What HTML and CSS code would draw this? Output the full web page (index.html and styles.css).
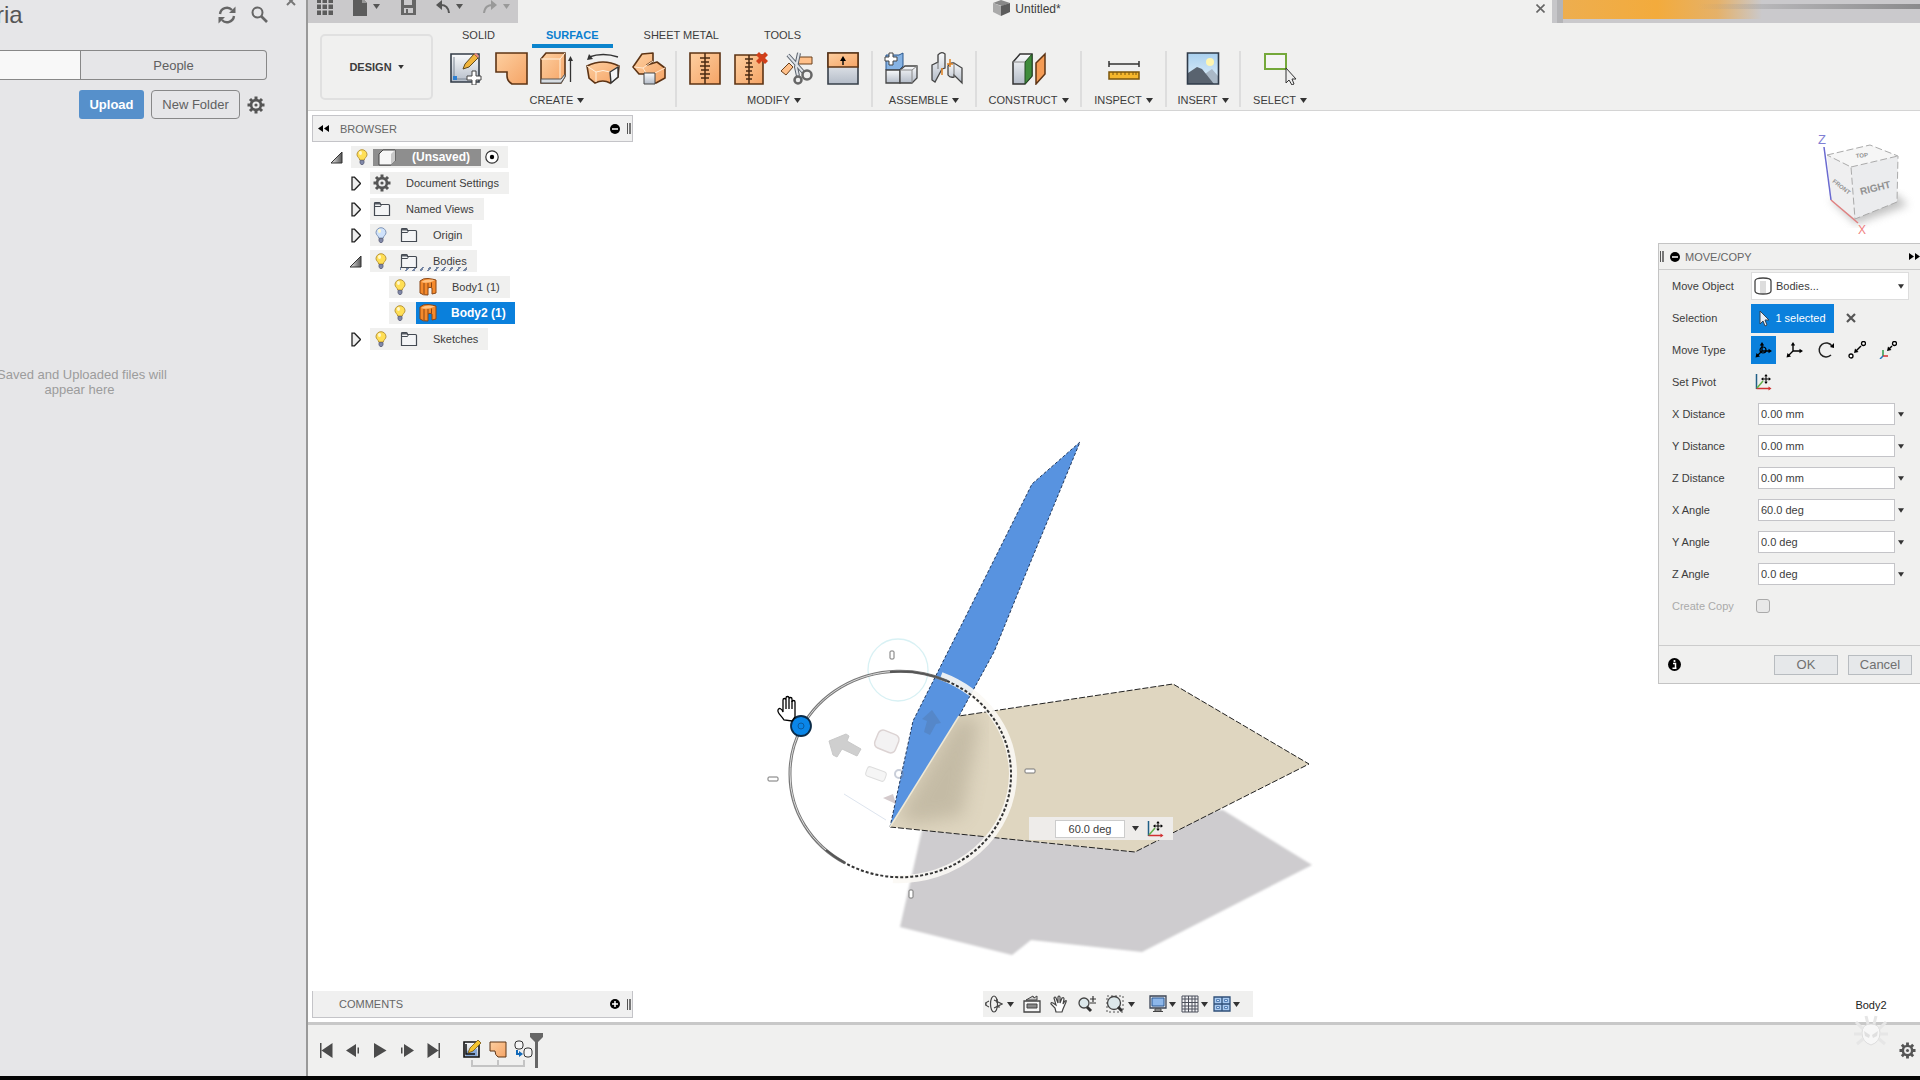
FILE: index.html
```html
<!DOCTYPE html>
<html lang="en">
<head>
<meta charset="utf-8">
<title>Untitled*</title>
<link rel="stylesheet" href="styles.css">
</head>
<body>
<svg class="defs" aria-hidden="true">
  <defs>
    <linearGradient id="peach" x1="0" y1="0" x2="1" y2="1"><stop offset="0" stop-color="#fdcfa0"/><stop offset="1" stop-color="#f5a466"/></linearGradient>
    <linearGradient id="steel" x1="0" y1="0" x2="0" y2="1"><stop offset="0" stop-color="#fafbfc"/><stop offset="1" stop-color="#b4bcc8"/></linearGradient>
    <linearGradient id="sky" x1="0" y1="0" x2="0" y2="1"><stop offset="0" stop-color="#a9d0ee"/><stop offset="1" stop-color="#e3f1fa"/></linearGradient>
    <linearGradient id="wedge" x1="0" y1="0" x2="1" y2="0"><stop offset="0" stop-color="#eee"/><stop offset="1" stop-color="#555"/></linearGradient>
  </defs>
  <symbol id="gear" viewBox="0 0 18 18"><g stroke="currentColor" stroke-width="3"><path d="M9 0.5v17M0.5 9h17M3 3l12 12M15 3L3 15"/></g><circle cx="9" cy="9" r="6.2" fill="currentColor"/><circle cx="9" cy="9" r="3.6" fill="#ececec"/><circle cx="9" cy="9" r="1.6" fill="currentColor"/></symbol>
  <symbol id="caret" viewBox="0 0 7 5"><path d="M0 0h7L3.500 5z" fill="currentColor"/></symbol>
  <symbol id="bulb" viewBox="0 0 14 16"><path d="M7 .7a5 5 0 0 1 5 5c0 2.300-2.500 3-2.700 5.300H4.700C4.500 8.700 2 8 2 5.700a5 5 0 0 1 5-5z" fill="var(--glow,#ffdf55)" stroke="var(--rim,#b8953a)"/><ellipse cx="5.500" cy="4" rx="1.500" ry="2" fill="#fff8cf"/><path d="M5 11.500h4v2.500l-1 1.500H6L5 14z" fill="#8088a8" stroke="#5c6078" stroke-width=".8"/></symbol>
  <symbol id="folder" viewBox="0 0 18 16"><path d="M1.500 14.500v-12q0-1 1-1h4q1 0 1 2h8q1 0 1 1v10z" fill="#f4f5f6" stroke="#444a52" stroke-width="1.200"/><path d="M2 5.500h5.500l1-2" fill="none" stroke="#444a52"/><path d="M2 2h5v1.500H2z" fill="#555a62"/></symbol>
  <symbol id="body" viewBox="0 0 18 18"><path d="M1 3q3-3 8-2.500t8 1.500v13l-4 1v-6q-2-1.500-4 0v7q-5 .5-8-2z" fill="#f58a2c" stroke="#8a4614"/><path d="M2 4q6 2 14-1.500Q8 0 2 4z" fill="#ffc383"/><path d="M5 5v11M9 5v5M12.500 4.500v5" stroke="#8a4614" fill="none"/></symbol>
  <symbol id="closed" viewBox="0 0 10 15"><path d="M1 1.200h2.500l6 6.300-6 6.300H1z" fill="#eee" stroke="#222" stroke-width="1.300"/></symbol>
  <symbol id="open" viewBox="0 0 13 13"><path d="M12 1v11H1z" fill="url(#wedge)" stroke="#333"/></symbol>
  <symbol id="pivot" viewBox="0 0 18 18"><path d="M2.500 1v15" stroke="#1f5f86" stroke-width="1.500"/><path d="M2.500 15.500h13" stroke="#d03030" stroke-width="1.500"/><path d="M3 15l6-7" stroke="#62b04a" stroke-width="1.500"/><path d="M14.500 13.500l3 2-3 2z" fill="#d03030"/><path d="M12 1l1.700 2.300h-3.400zM12 11l1.700-2.300h-3.400zM7 6l2.300-1.700v3.400zM17 6l-2.300-1.700v3.400z"/><path d="M12 3v6M9 6h6" stroke="#000"/></symbol>
  <symbol id="triad" viewBox="0 0 18 18"><path d="M7 10V3M7 10h8M7 10l-5 5" stroke="currentColor" stroke-width="1.400" fill="none"/><path d="M7 1l2.200 3.500H4.800zM17 10l-3.500 2.200V7.800zM.5 16.500l1-4.500 3.500 3.500z" fill="currentColor"/></symbol>
</svg>

<div class="workspace">
  <aside class="data-panel">
    <div class="panel-head">
      <h1>ria</h1>
      <button class="bare" aria-label="Refresh"><svg width="18" height="18" viewBox="0 0 18 18" fill="none" stroke="#666" stroke-width="2.400"><path d="M2 8a7 7 0 0 1 12-4M16 10a7 7 0 0 1-12 4"/><path d="M17.500.5v6.500h-6.500zM.5 17.500v-6.500H7z" fill="#666" stroke="none"/></svg></button>
      <button class="bare" aria-label="Search"><svg width="17" height="17" viewBox="0 0 17 17" fill="none" stroke="#666"><circle cx="6.500" cy="6.500" r="5" stroke-width="2"/><path d="M10 10l6 6" stroke-width="2.600"/></svg></button>
      <button class="bare close" aria-label="Close"><svg width="10" height="10" viewBox="0 0 10 10" stroke="#777" stroke-width="2"><path d="M1 1l8 8M9 1L1 9"/></svg></button>
    </div>
    <div class="segments"><button class="on" aria-label="Data"></button><button>People</button></div>
    <div class="actions"><button class="upload">Upload</button><button class="new-folder">New Folder</button><button class="bare" aria-label="Settings"><svg class="cog" width="18" height="18"><use href="#gear"/></svg></button></div>
    <p class="empty">Saved and Uploaded files will<br>appear here</p>
  </aside>

  <div class="app">
    <div class="titlebar">
      <div class="quick">
        <button class="bare" aria-label="Grid"><svg width="16" height="16" viewBox="0 0 16 16" fill="#5c5c5c"><path d="M0 0h4v4H0zM5.500 0h4.500v4H5.500zM11.500 0H16v4h-4.500zM0 5.500h4V10H0zM5.500 5.500h4.500V10H5.500zM11.500 5.500H16V10h-4.500zM0 11.500h4V16H0zM5.500 11.500h4.500V16H5.500zM11.500 11.500H16V16h-4.500z"/></svg></button>
        <button class="bare file" aria-label="File"><svg width="14" height="18" viewBox="0 0 14 18"><path d="M0 0h9l5 5v13H0z" fill="#5c5c5c"/><path d="M9 0v5h5" fill="#999"/></svg><svg class="caret" width="7" height="5"><use href="#caret"/></svg></button>
        <button class="bare" aria-label="Save"><svg width="15" height="17" viewBox="0 0 15 17"><path d="M0 0h13l2 2v15H0z" fill="#666"/><path d="M3 1h8v6H3zM3 10h9v5H3z" fill="#cbcacc"/><path d="M5 11h2v4H5z" fill="#666"/></svg></button>
        <button class="bare" aria-label="Undo"><svg width="14" height="14" viewBox="0 0 14 14"><path d="M3 5q9-1 10 8" fill="none" stroke="#555" stroke-width="2"/><path d="M0 5l6-5v10z" fill="#555"/></svg><svg class="caret" width="7" height="5"><use href="#caret"/></svg></button>
        <button class="bare dim" aria-label="Redo"><svg width="14" height="14" viewBox="0 0 14 14"><path d="M11 5q-9-1-10 8" fill="none" stroke="#999" stroke-width="2"/><path d="M14 5L8 0v10z" fill="#999"/></svg><svg class="caret" width="7" height="5"><use href="#caret"/></svg></button>
      </div>
      <div class="doc-tab"><svg width="17" height="16" viewBox="0 0 17 16"><path d="M0 3l8-3 9 3-8 3z" fill="#888"/><path d="M0 3l8 3v10l-8-4z" fill="#aaa"/><path d="M8 6l9-3v9l-9 4z" fill="#5c5c5c"/></svg><span>Untitled*</span></div>
      <button class="bare tab-close" aria-label="Close tab"><svg width="9" height="9" viewBox="0 0 9 9" stroke="#666" stroke-width="1.600"><path d="M.5.5l8 8M8.500.5l-8 8"/></svg></button>
      <div class="accent"></div>
    </div>

    <header class="ribbon">
      <button class="design">DESIGN <svg class="caret" width="6" height="4"><use href="#caret"/></svg></button>
      <div class="ribbon-body">
        <nav class="tabs"><a href="#solid">SOLID</a><a href="#surface" class="current">SURFACE</a><a href="#sheet">SHEET METAL</a><a href="#tools">TOOLS</a></nav>
        <div class="groups">
          <section class="group create">
            <div class="icons">
              <button aria-label="Create Sketch"><svg width="34" height="34" viewBox="0 0 34 34"><path d="M3 3h28v28H3z" fill="url(#steel)" stroke="#333c48" stroke-width="1.600"/><path d="M6 6v22h20" stroke="#7d8794" fill="none"/><path d="M5 25h4v4H5z" fill="#2f7fd0"/><path d="M15 18l2-5L26 3l4 4-9 9z" fill="#f0b43c" stroke="#5e4a1e"/><path d="M26 3l2-1 3 3-1 2z" fill="#e88b80"/><path d="M24 20h4v5h5v4h-5v5h-4v-5h-5v-4h5z" fill="#fff" stroke="#444"/></svg></button>
              <button aria-label="Patch"><svg width="34" height="34" viewBox="0 0 34 34"><path d="M2 2h31v31H18q-5-3-5-8v-4H2z" fill="url(#peach)" stroke="#5d3415" stroke-width="1.600"/></svg></button>
              <button aria-label="Extrude"><svg width="34" height="34" viewBox="0 0 34 34"><path d="M1 8l5-6h19v23l-4 7H1z" fill="url(#peach)" stroke="#5d3415" stroke-width="1.600"/><path d="M1 8h19l5-6M20 8v20" stroke="#fff0dc" fill="none"/><path d="M1 28h20l4-5v3l-4 6H1z" fill="#d8dde2" stroke="#555"/><path d="M30.500 31V8" stroke="#333" stroke-width="1.300"/><path d="M30.500 5l2.500 5h-5z" fill="#333"/></svg></button>
              <button aria-label="Revolve"><svg width="34" height="34" viewBox="0 0 34 34"><path d="M1 15q16-8 32 0l-1 11-8 6q-7-4-15 0l-6-5z" fill="url(#peach)" stroke="#5d3415" stroke-width="1.600"/><path d="M1 15l9 6q7-3 14 0l9-6M10 21v10" stroke="#fff0dc" fill="none"/><path d="M24 21l8-5v10l-7 6z" fill="#f3f5f7" stroke="#333" stroke-width="1.400"/><path d="M3 6q14-5 29 0" fill="none" stroke="#333" stroke-width="1.400"/><path d="M1 9l2-6 4 5z" fill="#333"/></svg></button>
              <button aria-label="Sweep"><svg width="34" height="34" viewBox="0 0 34 34"><path d="M1 16L10 3l11-1v8l-6 4 10-3 8 6v10l-9 5H13v-9H7z" fill="url(#peach)" stroke="#5d3415" stroke-width="1.600" stroke-linejoin="round"/><path d="M2 16l9 1 10-7M23 22l10-5M11 17l3 5" stroke="#ffe6cd" fill="none"/><path d="M12 22h11v11H12z" fill="url(#steel)" stroke="#444"/></svg></button>
            </div>
            <button class="menu">CREATE <svg class="caret" width="7" height="5"><use href="#caret"/></svg></button>
          </section>
          <section class="group modify">
            <div class="icons">
              <button aria-label="Stitch"><svg width="34" height="34" viewBox="0 0 34 34"><path d="M2 2h30v31H2z" fill="url(#peach)" stroke="#5d3415" stroke-width="1.600"/><path d="M17 2v31M12 7h10M13 11h8M12 15h10M13 19h8M12 23h10M13 27h8" stroke="#4a2a12" stroke-width="1.500"/></svg></button>
              <button aria-label="Unstitch"><svg width="34" height="34" viewBox="0 0 34 34"><path d="M1 4h28v29H1z" fill="url(#peach)" stroke="#5d3415" stroke-width="1.600"/><path d="M15 4v29M11 8h8M12 12h6M11 16h8M12 20h6M11 24h8M12 28h6" stroke="#4a2a12" stroke-width="1.500"/><path d="M22 4l3-3 3 3 3-3 3 3-3 3 3 3-3 3-3-3-3 3-3-3 3-3z" fill="#d2401a"/></svg></button>
              <button aria-label="Trim"><svg width="34" height="34" viewBox="0 0 34 34"><path d="M18 6h14v7H18zM1 20l8-8 4 4-7 8z" fill="#ffc08a" stroke="#6b401c"/><path d="M8 4l16 18M19 2l-3 14 2 9" stroke="#59616b" stroke-width="4" fill="none"/><path d="M8 4l16 18M19 2l-3 14 2 9" stroke="#dfe3e8" stroke-width="2" fill="none"/><circle cx="18" cy="29" r="3.500" fill="#eee" stroke="#666" stroke-width="2.500"/><circle cx="27" cy="24" r="4.500" fill="#eee" stroke="#666" stroke-width="2.500"/></svg></button>
              <button aria-label="Extend"><svg width="34" height="34" viewBox="0 0 34 34"><path d="M2 2h30v31H2z" fill="url(#steel)" stroke="#37404a" stroke-width="1.600"/><path d="M2 2h30v14H2z" fill="url(#peach)" stroke="#5d3415" stroke-width="1.600"/><path d="M17 14V8" stroke="#111" stroke-width="1.500"/><path d="M17 5l3 5h-6z"/></svg></button>
            </div>
            <button class="menu">MODIFY <svg class="caret" width="7" height="5"><use href="#caret"/></svg></button>
          </section>
          <section class="group assemble">
            <div class="icons">
              <button aria-label="New Component"><svg width="34" height="34" viewBox="0 0 34 34"><path d="M2 4h13l4-2v13l-4 4H2z" fill="#86b3e4" stroke="#2b578c"/><path d="M2 19h14v13H2z" fill="url(#steel)" stroke="#444" stroke-width="1.300"/><path d="M16 19l5-4h12v12l-5 5H16z" fill="url(#steel)" stroke="#444" stroke-width="1.300"/><path d="M16 19h12l5-4M28 19v13" fill="none" stroke="#888"/><path d="M5 2h4v4h4v4H9v4H5v-4H1V6h4z" fill="#fff" stroke="#444"/></svg></button>
              <button aria-label="Joint"><svg width="34" height="34" viewBox="0 0 34 34"><path d="M2 14l6-3V4q3-4 7-1v14l-3 1-7 13-3-2z" fill="url(#steel)" stroke="#444" stroke-width="1.300"/><path d="M18 15q2-4 6-3l8 5v15l-8-8v2q-4 1-6-2z" fill="url(#steel)" stroke="#444" stroke-width="1.300"/><path d="M8 4v14M24 12v14" stroke="#777"/><path d="M12 17v7M20 8v8M17 13h6" stroke="#e0872c" stroke-width="1.600"/></svg></button>
            </div>
            <button class="menu">ASSEMBLE <svg class="caret" width="7" height="5"><use href="#caret"/></svg></button>
          </section>
          <section class="group construct">
            <div class="icons"><button aria-label="Offset Plane"><svg width="34" height="34" viewBox="0 0 34 34"><path d="M1 11l7-8h12v22l-7 8H1z" fill="url(#steel)" stroke="#333" stroke-width="1.500"/><path d="M13 11l7-8v22l-7 8z" fill="#3f8c3c" stroke="#234a22"/><path d="M1 11h12" stroke="#888"/><path d="M24 12l9-9v20l-9 10z" fill="#f59c55" stroke="#5d3415" stroke-width="1.500"/></svg></button></div>
            <button class="menu">CONSTRUCT <svg class="caret" width="7" height="5"><use href="#caret"/></svg></button>
          </section>
          <section class="group inspect">
            <div class="icons"><button aria-label="Measure"><svg width="34" height="34" viewBox="0 0 34 34"><path d="M2 13h30M2 10v6M32 10v6" stroke="#333" stroke-width="1.500"/><path d="M2 21h30v7H2z" fill="#f6b72c" stroke="#7b560c" stroke-width="1.500"/><path d="M6 21v3M10 21v3M14 21v3M18 21v3M22 21v3M26 21v3M29 21v3" stroke="#7b560c"/></svg></button></div>
            <button class="menu">INSPECT <svg class="caret" width="7" height="5"><use href="#caret"/></svg></button>
          </section>
          <section class="group insert">
            <div class="icons"><button aria-label="Canvas"><svg width="34" height="34" viewBox="0 0 34 34"><path d="M1.500 2h31v31h-31z" fill="url(#sky)"/><circle cx="24" cy="11" r="4" fill="#fff6b0"/><path d="M16 25l10-7 6 7v8H16z" fill="#a9b8c6"/><path d="M2 22l9-6 5 2 12 15H2z" fill="#59636f"/><path d="M1.500 2h31v31h-31z" fill="none" stroke="#2f3b49" stroke-width="1.600"/></svg></button></div>
            <button class="menu">INSERT <svg class="caret" width="7" height="5"><use href="#caret"/></svg></button>
          </section>
          <section class="group select">
            <div class="icons"><button aria-label="Select"><svg width="34" height="34" viewBox="0 0 34 34"><path d="M2 3h21v15H2z" fill="#f4f4f4" stroke="#74a83a" stroke-width="2"/><path d="M23 17v15l3-3 3 5 2-1-2-5h4z" fill="#eee" stroke="#333"/></svg></button></div>
            <button class="menu">SELECT <svg class="caret" width="7" height="5"><use href="#caret"/></svg></button>
          </section>
        </div>
      </div>
    </header>

    <main class="canvas">
      <svg class="scene" viewBox="308 111 1612 911" aria-label="Model view">
        <defs><filter id="soft"><feGaussianBlur stdDeviation="1"/></filter><filter id="smudge"><feGaussianBlur stdDeviation="9"/></filter><clipPath id="plate"><path d="M890 827L959 716L1173 684L1309 764L1135 852z"/></clipPath></defs>
        <path d="M922 830L900 927L1012 955L1031 940L1142 952L1312 865L1223 810z" fill="#cecccf" filter="url(#soft)"/>
        <path d="M890 827L959 716L1173 684L1309 764L1135 852z" fill="#dfd6c0"/>
        <g clip-path="url(#plate)"><path d="M958 716l22 4-18 96-50 8-14-8z" fill="#a59c86" opacity=".45" filter="url(#smudge)"/></g>
        <path d="M890 827L1135 852L1309 764L1173 684L959 716" fill="none" stroke="#222" stroke-dasharray="6 2"/>
        <path d="M1080 442L1032 484L966 616L913 721L890 827L959 716L994 652L1024 578z" fill="#5893e0"/>
        <path d="M959 716L994 652L1024 578L1080 442L1032 484L966 616L913 721L890 827" fill="none" stroke="#23395c" stroke-dasharray="3 2"/>
        <path d="M890 827L959 716" stroke="#f0e9d5" stroke-width="1.500"/>
        <ellipse cx="898" cy="670" rx="30" ry="31" fill="none" stroke="#d8f1f4" stroke-width="1.300"/>
        <path d="M844 794l42 26" stroke="#dde4ee"/>
        <path d="M829 741l17-7 3 2-2 5 14 8-4 7-15-7-5 8-4-2z" fill="#cfcfcf" stroke="#c9c9c9"/>
        <rect x="876" y="732" width="22" height="19" rx="5" transform="rotate(22 887 741)" fill="#f3f2f3" stroke="#dcd3d3" stroke-width="1.500"/>
        <rect x="866" y="769" width="20" height="10" rx="3" transform="rotate(20 876 774)" fill="#f5f5f5" stroke="#ddd"/>
        <path d="M922 719l10-9 9 13-5 1-6 11-6-3 3-11z" fill="#51729f" opacity=".35"/>
        <circle cx="899" cy="774" r="4" fill="none" stroke="#7784a0" stroke-width="2" opacity=".4"/>
        <path d="M883 798l10-4 3 10z" fill="#b8a6aa" opacity=".6"/>
        <path d="M941 676A114 106 0 0 1 1013 774A114 106 0 0 1 893 879" fill="none" stroke="#fbf8f4" stroke-width="8" opacity=".9"/>
        <path d="M845 863A110 102 0 0 1 790 774A110 102 0 0 1 947 681" fill="none" stroke="#777" stroke-width="3"/>
        <path d="M845 863A110 102 0 0 1 790 774A110 102 0 0 1 947 681" fill="none" stroke="#ddd"/>
        <path d="M947 681A110 102 0 0 1 1011 774A110 102 0 0 1 845 863" fill="none" stroke="#333" stroke-width="2" stroke-dasharray="3 2"/>
        <path d="M890 672A110 102 0 0 1 947 681M845 863A110 102 0 0 1 826 850" fill="none" stroke="#555" stroke-width="2"/>
        <g fill="#fff" stroke="#777"><rect x="890" y="651" width="4" height="8" rx="1"/><rect x="909" y="890" width="4" height="8" rx="1"/><rect x="768" y="777" width="10" height="4" rx="1"/><rect x="1025" y="769" width="10" height="4" rx="1"/></g>
        <circle cx="801" cy="726" r="10" fill="#0a86e8" stroke="#0b2b48" stroke-width="1.800"/><circle cx="801" cy="726" r="3" fill="none" stroke="#0b5ba0"/>
        <path d="M784 720c-3-5-7-7-6-10s4-1 5 2v-12c0-2 3-2 3 0v-2c0-2 3-2 3 0v1c0-2 3-2 3 0v3c0-2 3-2 3 0v15l-3 4z" fill="#fff" stroke="#000" stroke-width="1.300"/><path d="M786 700v9M789 699v10M792 701v8" stroke="#000" stroke-width="1.300"/>
      </svg>

      <form class="hud"><input type="text" aria-label="Angle" value="60.0 deg"><svg class="caret" width="7" height="5"><use href="#caret"/></svg><svg width="18" height="18"><use href="#pivot"/></svg></form>

      <section class="browser">
        <div class="dock-head"><svg width="11" height="7" viewBox="0 0 11 7"><path d="M5 0v7L0 3.500zM11 0v7L6 3.500z"/></svg><h2>BROWSER</h2><svg width="10" height="10" viewBox="0 0 10 10"><circle cx="5" cy="5" r="5"/><path d="M2 5h6" stroke="#fff" stroke-width="1.500"/></svg><i class="grips"></i></div>
        <ul class="tree">
          <li class="l0"><svg width="13" height="13"><use href="#open"/></svg><div class="node"><svg width="14" height="16"><use href="#bulb"/></svg><span class="root"><svg width="18" height="17" viewBox="0 0 18 17"><path d="M1 5l4-4h12v11l-4 4H1z" fill="#f6f6f6" stroke="#444"/><path d="M13 5v11l4-4V1z" fill="#c9c9c9"/></svg>(Unsaved)</span><svg width="14" height="14" viewBox="0 0 14 14"><circle cx="7" cy="7" r="6.200" fill="#fff" stroke="#333" stroke-width="1.200"/><circle cx="7" cy="7" r="2.200"/></svg></div></li>
          <li class="l1"><svg width="10" height="15"><use href="#closed"/></svg><div class="node"><svg class="cog" width="18" height="18"><use href="#gear"/></svg><span>Document Settings</span></div></li>
          <li class="l1"><svg width="10" height="15"><use href="#closed"/></svg><div class="node"><svg width="18" height="16"><use href="#folder"/></svg><span>Named Views</span></div></li>
          <li class="l1"><svg width="10" height="15"><use href="#closed"/></svg><div class="node lit"><svg class="off" width="14" height="16"><use href="#bulb"/></svg><svg width="18" height="16"><use href="#folder"/></svg><span>Origin</span></div></li>
          <li class="l1 wide"><svg width="13" height="13"><use href="#open"/></svg><div class="node lit"><svg width="14" height="16"><use href="#bulb"/></svg><span class="hatched"><svg width="18" height="16"><use href="#folder"/></svg>Bodies</span></div></li>
          <li class="l2"><div class="node lit"><svg width="14" height="16"><use href="#bulb"/></svg><svg width="18" height="18"><use href="#body"/></svg><span>Body1 (1)</span></div></li>
          <li class="l2"><div class="node lit picked"><svg width="14" height="16"><use href="#bulb"/></svg><span class="chosen"><svg width="18" height="18"><use href="#body"/></svg>Body2 (1)</span></div></li>
          <li class="l1"><svg width="10" height="15"><use href="#closed"/></svg><div class="node lit"><svg width="14" height="16"><use href="#bulb"/></svg><svg width="18" height="16"><use href="#folder"/></svg><span>Sketches</span></div></li>
        </ul>
      </section>

      <section class="comments dock-head"><h2>COMMENTS</h2><svg width="10" height="10" viewBox="0 0 10 10"><circle cx="5" cy="5" r="5"/><path d="M2 5h6M5 2v6" stroke="#fff" stroke-width="1.500"/></svg><i class="grips"></i></section>

      <div class="viewbar">
        <button aria-label="Orbit"><svg width="18" height="18" viewBox="0 0 18 18" fill="none" stroke="#444" stroke-width="1.200"><ellipse cx="9" cy="9" rx="3.500" ry="8"/><path d="M4 6q-7 3 0 6M9 5l8 4-8 4M1 7v4M11 12h4M12 4v4"/></svg><svg class="caret" width="7" height="5"><use href="#caret"/></svg></button>
        <button aria-label="Look At"><svg width="18" height="18" viewBox="0 0 18 18"><path d="M1 6h16v11H1z" fill="#f6f6f6" stroke="#444" stroke-width="1.300"/><path d="M3 5l7-4 1 2 3-2v4z" fill="#ccc" stroke="#444"/><path d="M4 9h10v4H4z" fill="#888" stroke="#444"/></svg></button>
        <button aria-label="Pan"><svg width="18" height="18" viewBox="0 0 18 18"><path d="M6 17l-1-4-4-4q-.5-2 2-1l3 2-2-7q1-2 2 0l2 5V2q1-2 2 0v6l2-5q2-1 2 1l-1 5 2-3q2-1 1 1l-3 7-1 3z" fill="#fff" stroke="#444" stroke-width="1.200"/></svg></button>
        <button aria-label="Zoom"><svg width="20" height="18" viewBox="0 0 20 18"><circle cx="7" cy="8" r="5" fill="#dce7ea" stroke="#444" stroke-width="1.300"/><path d="M10 12l4 4" stroke="#333" stroke-width="3"/><path d="M13 4h6M16 1v6M13 8h6" stroke="#333" stroke-width="1.200"/></svg></button>
        <button aria-label="Fit"><svg width="18" height="18" viewBox="0 0 18 18"><path d="M1 1h16v16H1z" fill="none" stroke="#555" stroke-dasharray="2 2"/><circle cx="8" cy="8" r="6.500" fill="#dce7ea" stroke="#444" stroke-width="1.300"/><path d="M12 12l4 4" stroke="#333" stroke-width="3"/></svg><svg class="caret" width="7" height="5"><use href="#caret"/></svg></button>
        <button class="after-gap" aria-label="Display"><svg width="18" height="18" viewBox="0 0 18 18"><path d="M1 1h16v12H1z" fill="#d5dbe2" stroke="#3c4656" stroke-width="1.300"/><path d="M3 3h12v8H3z" fill="#8db7ea" stroke="#2d5a96"/><path d="M6 14h6v2H6zM4 16.500h10" stroke="#444" fill="#ccc"/></svg><svg class="caret" width="7" height="5"><use href="#caret"/></svg></button>
        <button aria-label="Grid"><svg width="18" height="18" viewBox="0 0 18 18"><path d="M1 1h16v16H1zM4 1v16M7.500 1v16M11 1v16M14 1v16M1 4h16M1 7.500h16M1 11h16M1 14h16" fill="#f4f4f6" stroke="#4b4f5a"/></svg><svg class="caret" width="7" height="5"><use href="#caret"/></svg></button>
        <button aria-label="Viewports"><svg width="18" height="18" viewBox="0 0 18 18"><path d="M1 2h16v14H1zM9 2v14M1 9h16" fill="#a9caf0" stroke="#2f4f78" stroke-width="1.300"/><path d="M3.500 4.500h3v2h-3zM11.500 4.500h3v2h-3zM3.500 11.500h3v2h-3zM11.500 11.500h3v2h-3z" fill="#cfe2f8" stroke="#5580b5"/></svg><svg class="caret" width="7" height="5"><use href="#caret"/></svg></button>
      </div>

      <div class="right-dock">
        <svg class="cube" width="110" height="118" viewBox="0 0 110 118">
          <defs><filter id="shade"><feGaussianBlur stdDeviation="4"/></filter></defs>
          <path d="M20 74L46 99L98 80L84 68z" fill="#999" opacity=".6" filter="url(#shade)"/>
          <path d="M17 30L60 20L88 31L41 42z" fill="#f6f6f6"/><path d="M17 30L41 42L45 94L21 75z" fill="#efeff0"/><path d="M41 42L88 31L87 77L45 94z" fill="#ebecee"/>
          <path d="M17 30L60 20L88 31L87 77L45 94L41 42L17 30M41 42L88 31" fill="none" stroke="#aaa" stroke-dasharray="7 3"/>
          <path d="M14 22L21 75" stroke="#6a6ad0" stroke-width="1.500"/><path d="M21 75L48 98" stroke="#e08080" stroke-width="1.500"/>
          <text x="8" y="19" class="axis-z">Z</text><text x="48" y="109" class="axis-x">X</text>
          <text x="51" y="70" transform="rotate(-14 51 70)" class="face">RIGHT</text>
          <text x="22" y="57" transform="rotate(38 22 57)" class="face small">FRONT</text>
          <text x="46" y="33" transform="rotate(-6 46 33)" class="face small">TOP</text>
        </svg>
        <form class="dialog">
          <div class="dialog-head"><i class="grips"></i><svg width="10" height="10" viewBox="0 0 10 10"><circle cx="5" cy="5" r="5"/><path d="M2 5h6" stroke="#fff" stroke-width="1.500"/></svg><h2>MOVE/COPY</h2><svg width="11" height="7" viewBox="0 0 11 7"><path d="M0 0v7l5-3.500zM6 0v7l5-3.500z"/></svg></div>
          <div class="fields">
            <div class="row"><label for="obj">Move Object</label><div class="picker"><svg width="18" height="18" viewBox="0 0 18 18"><path d="M1 4q0-3 8-3t8 3v10q0 3-8 3t-8-3z" fill="#fff" stroke="#444" stroke-width="1.300"/><path d="M6 4h6v12H6z" fill="#ddd"/></svg><select id="obj"><option>Bodies...</option></select><svg class="caret" width="6" height="5"><use href="#caret"/></svg></div></div>
            <div class="row"><span class="label">Selection</span><button type="button" class="selected"><svg width="10" height="17" viewBox="0 0 10 17"><path d="M1 1v13l3-3 2 5 2-1-2-5h4z" fill="#e8eef5" stroke="#345"/></svg>1 selected</button><button type="button" class="bare clear" aria-label="Clear"><svg width="10" height="10" viewBox="0 0 10 10" stroke="#555" stroke-width="2.200"><path d="M1 1l8 8M9 1L1 9"/></svg></button></div>
            <div class="row"><span class="label">Move Type</span><div class="types">
              <button type="button" class="on" aria-label="Free Move"><svg width="18" height="18"><use href="#triad"/><circle cx="8" cy="9" r="3" fill="none" stroke="#000" stroke-width="1.200"/></svg></button>
              <button type="button" aria-label="Translate"><svg width="18" height="18"><use href="#triad"/></svg></button>
              <button type="button" aria-label="Rotate"><svg width="18" height="18" viewBox="0 0 18 18"><path d="M14 14A7 7 0 1 1 15 5" fill="none" stroke="#222" stroke-width="1.500"/><path d="M17 2v5l-4-1z"/></svg></button>
              <button type="button" aria-label="Point to Point"><svg width="18" height="18" viewBox="0 0 18 18"><circle cx="3" cy="15" r="2" fill="#fff" stroke="#000" stroke-width="1.300"/><circle cx="15.500" cy="2.500" r="2" fill="#fff" stroke="#000" stroke-width="1.300"/><path d="M13 5l-5 5" stroke="#000" stroke-width="1.500"/><path d="M6 12l1-4.500 3.500 3.500z"/></svg></button>
              <button type="button" aria-label="Point to Position"><svg width="18" height="18" viewBox="0 0 18 18"><circle cx="15.500" cy="2.500" r="2" fill="#fff" stroke="#000" stroke-width="1.300"/><path d="M13 5l-3 3" stroke="#000" stroke-width="1.500"/><path d="M8 10l1-4.500 3.500 3.500z"/><path d="M4 15V9" stroke="#2b9a4a" stroke-width="1.500"/><path d="M4 15h5" stroke="#d03030" stroke-width="1.500"/><path d="M4 15l-3 3" stroke="#2377c0" stroke-width="1.500"/></svg></button>
            </div></div>
            <div class="row"><span class="label">Set Pivot</span><button type="button" class="bare pivot" aria-label="Set Pivot"><svg width="18" height="18"><use href="#pivot"/></svg></button></div>
            <div class="row"><label for="xd">X Distance</label><input class="value" id="xd" type="text" value="0.00 mm"><svg class="caret" width="6" height="5"><use href="#caret"/></svg></div>
            <div class="row"><label for="yd">Y Distance</label><input class="value" id="yd" type="text" value="0.00 mm"><svg class="caret" width="6" height="5"><use href="#caret"/></svg></div>
            <div class="row"><label for="zd">Z Distance</label><input class="value" id="zd" type="text" value="0.00 mm"><svg class="caret" width="6" height="5"><use href="#caret"/></svg></div>
            <div class="row"><label for="xa">X Angle</label><input class="value" id="xa" type="text" value="60.0 deg"><svg class="caret" width="6" height="5"><use href="#caret"/></svg></div>
            <div class="row"><label for="ya">Y Angle</label><input class="value" id="ya" type="text" value="0.0 deg"><svg class="caret" width="6" height="5"><use href="#caret"/></svg></div>
            <div class="row"><label for="za">Z Angle</label><input class="value" id="za" type="text" value="0.0 deg"><svg class="caret" width="6" height="5"><use href="#caret"/></svg></div>
            <div class="row disabled"><label for="copy">Create Copy</label><input id="copy" type="checkbox" disabled></div>
          </div>
          <div class="dialog-foot"><svg width="13" height="13" viewBox="0 0 13 13"><circle cx="6.500" cy="6.500" r="6.500"/><path d="M5 5.500h2.500v4.500M4.500 10.200h4" stroke="#fff" stroke-width="1.500" fill="none"/><circle cx="6.500" cy="3" r="1.100" fill="#fff"/></svg><button type="button">OK</button><button type="button">Cancel</button></div>
        </form>
        <div class="hint"><span>Body2</span><svg width="40" height="36" viewBox="0 0 40 36"><path d="M20 12q9 0 9 9t-9 12q-9-3-9-12t9-9z" fill="#f7f7f7" stroke="#ddd"/><path d="M13 19l6 4-1 3-4-2zM27 19l-6 4 1 3 4-2z" fill="#e0e0e0"/><path d="M12 17L5 10M11 22H3M12 27l-6 5M28 17l7-7M29 22h8M28 27l6 5M17 12l-2-8M23 12l2-8" fill="none" stroke="#e6e6e6" stroke-width="3"/></svg></div>
      </div>
    </main>

    <footer class="timeline">
      <div class="play">
        <button aria-label="Start"><svg width="14" height="15" viewBox="0 0 14 15"><path d="M1 0h1.500v15H1zM13.500 0v15L2.500 7.500z"/></svg></button>
        <button aria-label="Back"><svg width="14" height="15" viewBox="0 0 14 15"><path d="M10 1v13L0 7.500zM11.500 4.500H13v6h-1.500z"/></svg></button>
        <button aria-label="Play"><svg width="14" height="15" viewBox="0 0 14 15"><path d="M1 0v15l12.500-7.500z"/></svg></button>
        <button aria-label="Forward"><svg width="14" height="15" viewBox="0 0 14 15"><path d="M4 1v13l10-6.500zM1 4.500h1.500v6H1z"/></svg></button>
        <button aria-label="End"><svg width="14" height="15" viewBox="0 0 14 15"><path d="M11.500 0H13v15h-1.500zM.5 0v15l11-7.500z"/></svg></button>
      </div>
      <svg class="history" width="82" height="36" viewBox="0 0 82 36">
        <path d="M3 9h15v15H3z" fill="url(#steel)" stroke="#111" stroke-width="1.600"/><path d="M5 18l11-2v7H5z" fill="#86a8d8"/><path d="M5 11v10h9" fill="none" stroke="#111" stroke-width="1.500"/><path d="M7 20l2-5 8-8 3 3-8 8z" fill="#f5c52e" stroke="#775511" stroke-width=".8"/>
        <path d="M29 9h16v15h-8q-3-2-3-6h-5z" fill="url(#peach)" stroke="#5d3415"/>
        <g fill="#f5f5f5" stroke="#333"><rect x="54" y="8" width="8" height="8" rx="3"/><rect x="63" y="15" width="8" height="9" rx="3"/></g><path d="M56 17v4h3" fill="none" stroke="#1269b8" stroke-width="2"/><path d="M58 18l4 3-4 3z" fill="#1269b8"/>
        <path d="M11 27v6h52v-6M37 27v6" fill="none" stroke="#c4c4c4" stroke-width="2"/>
        <path d="M69 0h13v4l-5 5v26h-3V9l-5-5z" fill="#666"/>
      </svg>
      <button class="bare timeline-cog" aria-label="Timeline settings"><svg class="cog" width="17" height="17"><use href="#gear"/></svg></button>
    </footer>
  </div>
</div>
<div class="strip"></div>
</body>
</html>
```

FILE: styles.css
```css
* { box-sizing: border-box; }
body { margin: 0; height: 100vh; display: flex; flex-direction: column; overflow: hidden; background: #fff; color: #3c3c3c; font: 11px/14px "Liberation Sans", Arial, sans-serif; }
button, input, select { font: inherit; color: inherit; }
button { padding: 0; border: 0; background: none; display: flex; align-items: center; justify-content: center; }
h1, h2, p, ul { margin: 0; padding: 0; font-weight: normal; }
h2 { font-size: 11px; color: #666; }
svg { display: block; flex: none; }
a { color: inherit; text-decoration: none; }
.defs { position: absolute; width: 0; height: 0; }
.caret { color: #333; }
.cog { color: #555; }
.workspace { flex: 1; min-height: 0; display: flex; }
.strip { height: 4px; background: #050505; }

.data-panel { width: 308px; flex: none; border-right: 2px solid #999; background: #e6e6e8; color: #606060; font-size: 13px; line-height: 15px; overflow: hidden; }
.panel-head { height: 50px; display: flex; align-items: flex-start; padding: 6px 10px 0 0; }
.panel-head h1 { flex: 1; margin-left: -4px; font-size: 24px; line-height: 18px; color: #555; }
.panel-head .bare { margin-right: 15px; }
.panel-head .bare.close { margin: -10px 0 0 3px; }
.segments { display: flex; height: 30px; margin-right: 39px; border: 1px solid #888; border-left: 0; border-radius: 0 4px 4px 0; }
.segments button { flex: 1; }
.segments .on { flex: 0 0 81px; background: #f8f8f8; border-right: 1px solid #888; }
.actions { display: flex; align-items: center; justify-content: flex-end; gap: 7px; height: 29px; margin: 10px 41px 0 0; }
.upload { width: 65px; height: 29px; border-radius: 3px; background: #5690cb; color: #fff; font-weight: bold; }
.new-folder { width: 89px; height: 29px; border: 1px solid #888; border-radius: 4px; }
.empty { width: 165px; margin: 248px 0 0 -3px; text-align: center; color: #9c9c9c; white-space: nowrap; }

.app { flex: 1; min-width: 0; display: flex; flex-direction: column; background: #f0f0ef; }
.titlebar { height: 23px; display: flex; align-items: flex-start; }
.quick { width: 210px; height: 23px; padding: 0 8px 10px 9px; background: #cac9cb; display: flex; align-items: center; justify-content: space-between; }
.quick button { gap: 6px; }
.quick .caret { color: #555; }
.dim .caret { color: #999; }
.doc-tab { flex: 1; display: flex; justify-content: center; gap: 5px; font-size: 12px; line-height: 18px; }
.tab-close { margin: 4px 7px 0 0; }
.accent { width: 368px; height: 23px; border-left: 5px solid #c6c6c9; background: linear-gradient(90deg, #b4b4b7 6px, transparent 6px), linear-gradient(transparent 19px, #cac9cc 19px), linear-gradient(90deg, #cac9cc00, #88888a) 140px 4px / 230px 5px no-repeat, linear-gradient(90deg, #edae50, #f3ab3c 100px, #e5b169 160px, #cac9cc 205px); }

.ribbon { display: flex; height: 88px; padding-left: 12px; border-bottom: 1px solid #d4d4d4; }
.design { width: 113px; height: 66px; margin-top: 11px; gap: 6px; border: 2px solid #e0e0e0; border-radius: 5px; font-weight: bold; }
.ribbon-body { display: flex; flex-direction: column; margin-left: 6px; }
.tabs { display: flex; height: 25px; padding-left: 23px; align-items: flex-end; }
.tabs a { height: 20px; line-height: 14px; padding: 0 14px; margin-right: 17px; border-bottom: 4px solid transparent; }
.tabs a:first-child { padding: 0; margin-right: 37px; }
.tabs .current { color: #0a7fcf; font-weight: bold; border-color: #0b84cd; }
.groups { display: flex; margin-top: 3px; height: 56px; }
.group { display: flex; flex-direction: column; align-items: center; border-right: 2px solid #ddd; }
.group.select { border: 0; }
.icons { display: flex; height: 36px; }
.icons button { width: 46px; height: 34px; }
.menu { gap: 4px; height: 14px; margin-top: 6px; white-space: nowrap; }
.create { width: 238px; }
.modify { width: 196px; }
.assemble { width: 104px; }
.construct { width: 105px; }
.inspect { width: 85px; }
.insert { width: 74px; }
.select { width: 78px; }

.canvas { flex: 1; min-height: 0; position: relative; display: grid; grid-template: 1fr auto / 1fr auto; background: #fff; }
.scene { position: absolute; inset: 0; width: 100%; height: 100%; }
.hud { position: absolute; left: 721px; top: 706px; width: 144px; height: 23px; display: flex; align-items: center; gap: 7px; background: #eeecea; }
.hud input { width: 70px; height: 18px; margin-left: 26px; padding: 0; border: 1px solid #ccc; text-align: center; background: #fff; }
.browser { position: relative; grid-area: 1 / 1; width: 321px; margin: 4px 0 0 4px; }
.dock-head { display: flex; align-items: center; height: 27px; padding: 0 1px 0 5px; gap: 11px; background: #f0f0f0; border: 1px solid #c4c4c8; }
.dock-head h2 { flex: 1; }
.grips { width: 4px; height: 11px; border-left: 1px solid #555; border-right: 2px solid #777; }
.dock-head .grips { margin-left: -4px; }
.comments { position: relative; grid-area: 2 / 1; width: 321px; margin: 0 0 4px 4px; padding-left: 26px; border-top: 0; }
.tree { list-style: none; display: flex; flex-direction: column; gap: 4px; margin-top: 4px; }
.tree li { display: flex; align-items: center; height: 22px; }
.tree .l0 { padding-left: 18px; gap: 8px; }
.tree .l1 { padding-left: 39px; gap: 9px; }
.tree .l1.wide { padding-left: 37px; gap: 8px; }
.tree .l2 { padding-left: 77px; }
.node { display: flex; align-items: center; height: 22px; gap: 15px; padding: 0 10px 0 3px; background: #f0f0ef; white-space: nowrap; }
.l0 .node { gap: 4px; padding: 0 9px 0 4px; }
.root { display: flex; align-items: center; height: 17px; gap: 16px; padding: 0 11px 0 5px; background: #8e8e8e; color: #fff; font-size: 12px; font-weight: bold; }
.node.lit { gap: 12px; padding-left: 4px; }
.node.lit > span { margin-left: 3px; }
.off { --glow: #cfe2fb; --rim: #8195b5; }
.node.lit > .hatched { display: flex; align-items: center; gap: 15px; margin-left: 0; height: 20px; background: repeating-linear-gradient(125deg, #7485a3 0 2px, transparent 2px 6px) 0 100% / 100% 4px no-repeat; }
.node.picked { padding-right: 0; gap: 9px; }
.node.lit > .chosen { display: flex; align-items: center; height: 22px; gap: 14px; margin-left: 0; padding: 0 9px 0 3px; background: #0a80dc; color: #fff; font-size: 12px; font-weight: bold; }

.viewbar { position: relative; grid-area: 2 / 1 / 3 / 3; justify-self: center; display: flex; align-items: center; gap: 9px; height: 26px; margin: 0 0 4px 8px; padding: 0 17px 0 2px; background: #f0f0ef; }
.viewbar button { gap: 4px; }
.viewbar .after-gap { margin-left: 5px; }
.viewbar .after-gap, .viewbar .after-gap ~ button { gap: 2px; margin-right: -4px; }

.right-dock { position: relative; grid-area: 1 / 2 / 3 / 3; display: flex; flex-direction: column; width: 262px; }
.cube { align-self: flex-end; margin-top: 14px; }
.face { font: bold 10px "Liberation Sans", sans-serif; fill: #929292; }
.face.small { font-size: 6px; }
.axis-z { font: 13px "Liberation Sans", sans-serif; fill: #7f7fd4; }
.axis-x { font: 12px "Liberation Sans", sans-serif; fill: #f07f7f; }
.dialog { background: #f0f0ef; border: 1px solid #c4c4c4; border-right: 0; }
.dialog-head { display: flex; align-items: center; height: 26px; gap: 5px; padding-left: 1px; border-bottom: 1px solid #ccc; }
.dialog-head .grips { margin-right: 1px; }
.dialog-head h2 { flex: 1; }
.fields { height: 375px; padding-left: 13px; }
.row { display: flex; align-items: center; height: 32px; }
.row label, .label { width: 79px; flex: none; }
.picker { display: flex; align-items: center; width: 158px; height: 28px; padding: 0 4px 0 2px; gap: 4px; background: #fff; border: 1px solid #ddd; }
.picker select { flex: 1; min-width: 0; padding: 0; border: 0; background: none; appearance: none; }
.selected { width: 83px; height: 29px; gap: 6px; background: #0a80dc; color: #fff; }
.clear { margin-left: 12px; }
.types { display: flex; gap: 6px; }
.types button { width: 25px; height: 28px; color: #000; }
.types .on { background: #0a80dc; }
.pivot { margin-left: 3px; }
.value { width: 137px; height: 22px; margin: 0 3px 0 7px; padding: 0 2px; border: 1px solid #c4c4c8; background: #fff; }
.disabled label { color: #aaa; }
.disabled input { appearance: none; width: 14px; height: 14px; margin: 0 0 0 5px; border: 1px solid #aaa; border-radius: 3px; background: #e8e8e8; }
.dialog-foot { display: flex; align-items: center; height: 38px; padding: 0 8px 0 9px; gap: 10px; border-top: 1px solid #ccc; }
.dialog-foot svg { margin-right: auto; }
.dialog-foot button { width: 64px; height: 20px; border: 1px solid #b8bcc0; background: #e6e8ea; color: #707070; font-size: 13px; }
.hint { display: flex; flex-direction: column; align-items: center; align-self: flex-end; margin-top: auto; margin-right: 29px; height: 24px; color: #222; }

.timeline { height: 54px; display: flex; align-items: center; border-top: 3px solid #c8c8c8; padding: 0 4px 0 11px; background: #f0f0ef; }
.play { display: flex; gap: 13px; fill: #4b4b4b; }
.history { margin-left: 20px; }
.timeline-cog { margin-left: auto; }
```
